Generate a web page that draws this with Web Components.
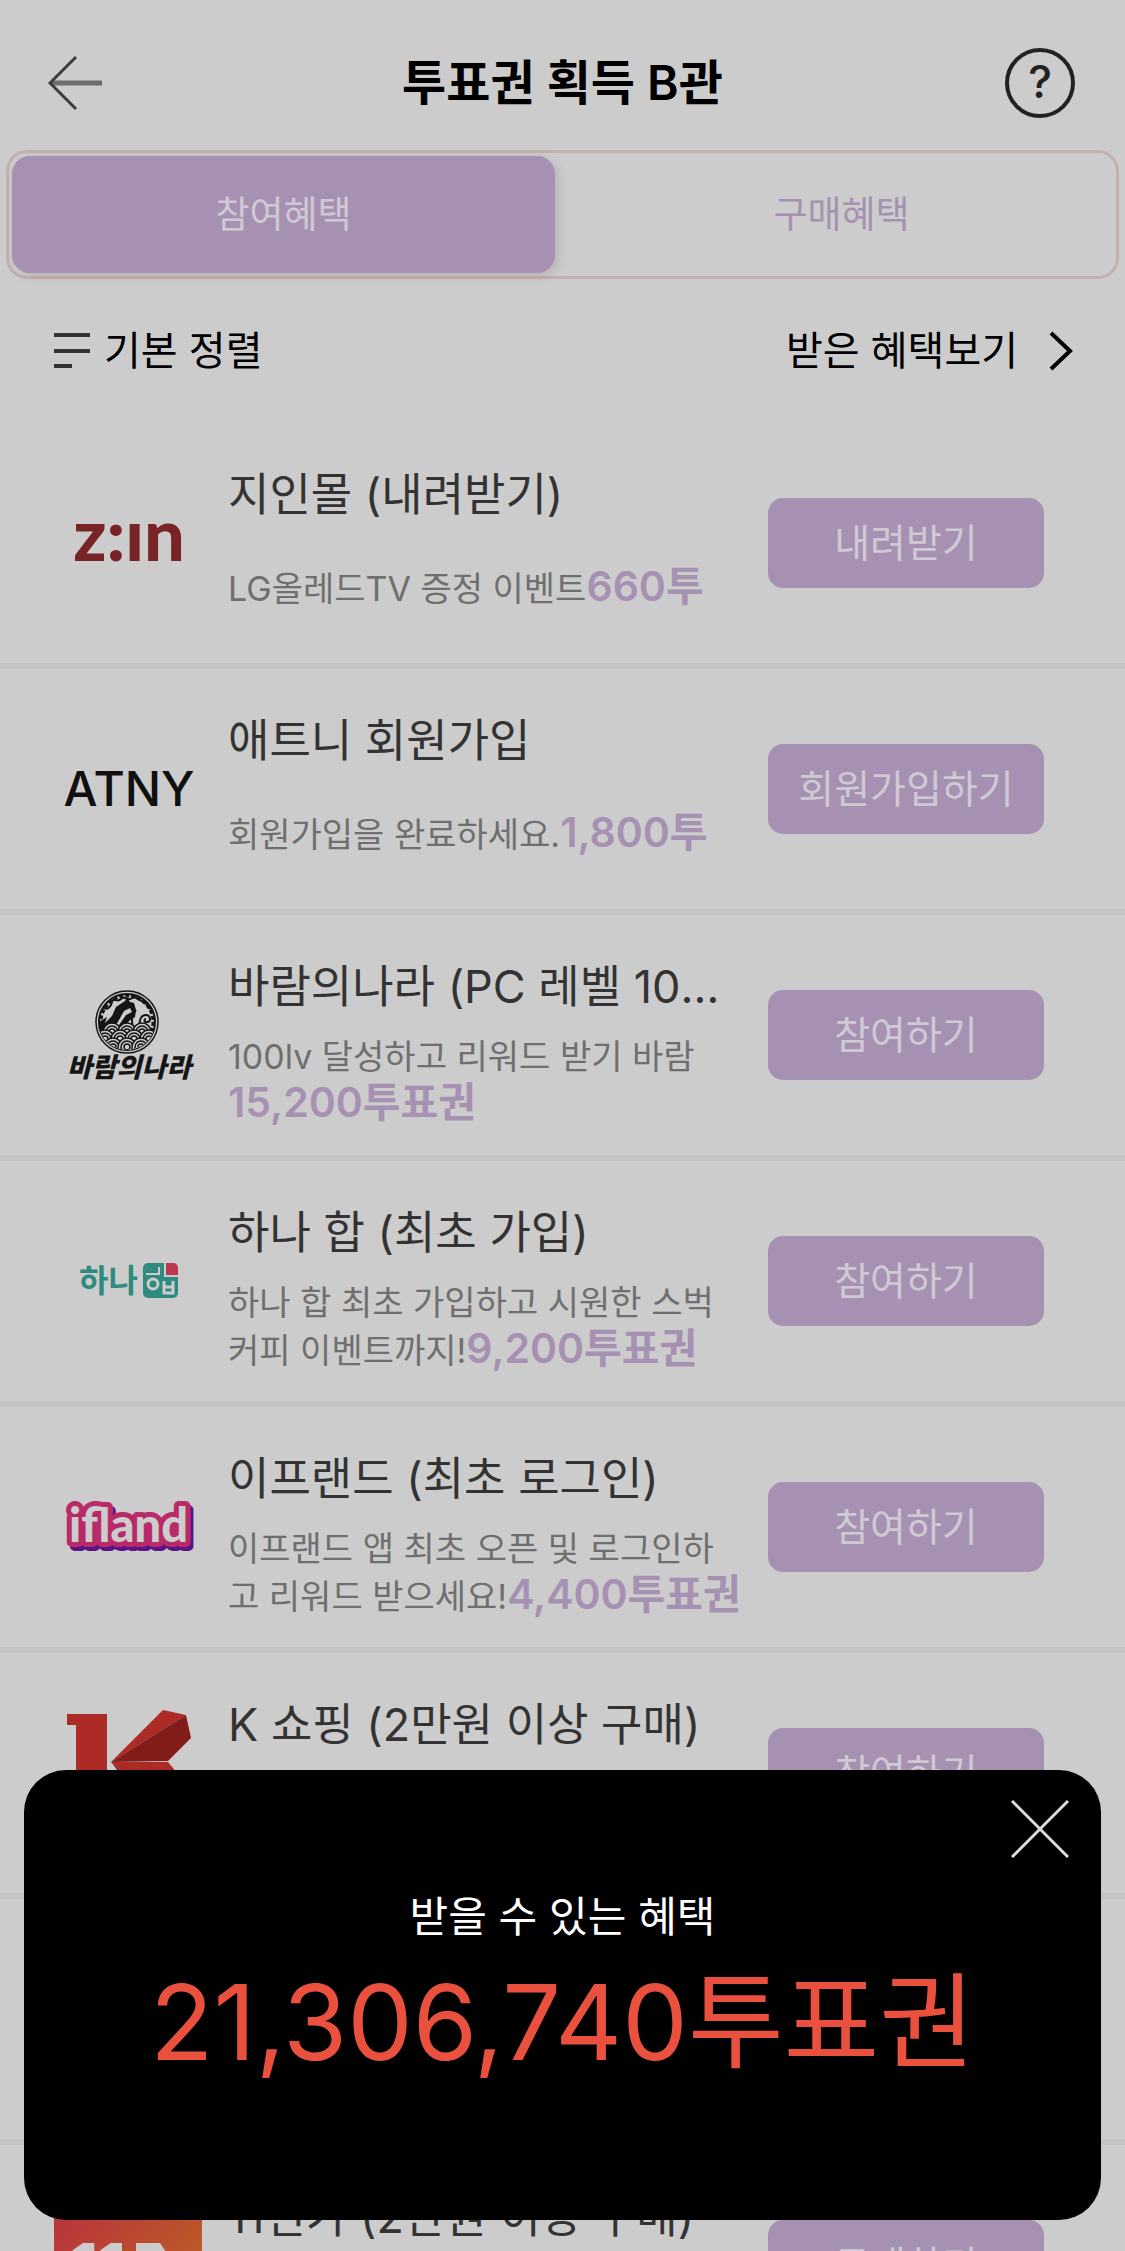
<!DOCTYPE html>
<html lang="ko">
<head>
<meta charset="utf-8">
<meta name="viewport" content="width=device-width, initial-scale=1">
<title>투표권 획득 B관</title>
<style>
  :root {
    --page: #ccc;
    --accent: #a791b3;
    --on-accent: #cfc9d3;
    --line: #c4c4c4;
  }
  body {
    margin: 0;
    background: var(--page);
    color: #000;
    font-family: Inter, "Noto Sans CJK KR", sans-serif;
  }
</style>
</head>
<body>
<vote-app>
  <app-header slot="header">투표권 획득 B관</app-header>
  <benefit-tabs slot="header" first="참여혜택" second="구매혜택"></benefit-tabs>
  <list-toolbar slot="header" sort="기본 정렬" history="받은 혜택보기"></list-toolbar>

  <offer-row name="지인몰 (내려받기)" points="660투" action="내려받기">
    <svg slot="logo" viewBox="0 0 148 150" role="img" aria-label="Z:IN">
      <text x="75" y="93" font-family="Lato" font-weight="900" font-size="72" text-anchor="middle" fill="#782427">z:ın</text>
    </svg>
    LG올레드TV 증정 이벤트
  </offer-row>

  <offer-row name="애트니 회원가입" points="1,800투" action="회원가입하기">
    <svg slot="logo" viewBox="0 0 148 150" role="img" aria-label="ATNY">
      <text x="75" y="92" font-family="Inter" font-weight="500" font-size="48" text-anchor="middle" fill="#101010">ATNY</text>
    </svg>
    회원가입을 완료하세요.
  </offer-row>

  <offer-row name="바람의나라 (PC 레벨 100 달성)" points="15,200투표권" action="참여하기">
    <svg slot="logo" viewBox="0 0 148 150" role="img" aria-label="바람의나라">
      <defs>
        <clipPath id="seal"><circle cx="73" cy="62" r="28"/></clipPath>
        <g id="wave" fill="#ccc" stroke="#151515" stroke-width="1.5">
          <circle r="9"/><circle r="6"/><circle r="3"/>
        </g>
      </defs>
      <circle cx="73" cy="62" r="31" fill="none" stroke="#151515" stroke-width="1.5"/>
      <circle cx="73" cy="62" r="28" fill="none" stroke="#151515" stroke-width="2"/>
      <g clip-path="url(#seal)">
        <circle cx="73" cy="62" r="26" fill="none" stroke="#151515" stroke-width="3" stroke-dasharray="4 2"/>
        <path d="M49 47c4 4 8 0 9-5s5 1 9-3 7 3 11-1 8 5 11 3 3 7 8 8" fill="none" stroke="#151515" stroke-width="2"/>
        <path d="M45 62l8-5-2 6 7-7 4-9 9-6 2-3 3 4 4 1 2 7-1 7-6 4-5 8-2 8H48z" fill="#151515"/>
        <path d="M70 51l6-3 2 4-6 3-9 13-2-1z" fill="#ccc"/>
        <path d="M79 68c-2-10-1-13 3-18M88 72c-4-6-3-16 3-17 6-1 7 8 1 7-2 0-2-3 0-3" fill="none" stroke="#151515" stroke-width="2"/>
        <use href="#wave" x="58" y="72"/><use href="#wave" x="73" y="72"/><use href="#wave" x="88" y="72"/>
        <use href="#wave" x="51" y="79"/><use href="#wave" x="66" y="79"/><use href="#wave" x="80" y="79"/><use href="#wave" x="95" y="79"/>
        <use href="#wave" x="59" y="87"/><use href="#wave" x="73" y="87"/><use href="#wave" x="87" y="87"/>
      </g>
      <text x="75" y="117" font-family="Noto Sans CJK KR" font-weight="900" font-style="italic" font-size="27" text-anchor="middle" fill="#151515">바람의나라</text>
    </svg>
    100lv 달성하고 리워드 받기 바람<br>
  </offer-row>

  <offer-row name="하나 합 (최초 가입)" points="9,200투표권" action="참여하기">
    <svg slot="logo" viewBox="0 0 148 150" role="img" aria-label="하나 합">
      <text x="25" y="86" font-family="Noto Sans CJK KR" font-weight="700" font-size="32" fill="#2f8a80">하나</text>
      <rect x="89" y="57" width="35" height="35" rx="5" fill="#2f8a80"/>
      <path d="M110 57h9a5 5 0 0 1 5 5v9h-14z" fill="#ccc"/>
      <path d="M112 57h7a5 5 0 0 1 5 5v7h-12z" fill="#bd3850"/>
      <path d="M92 68h13M105 61v8" stroke="#ccc" stroke-width="2" fill="none"/>
      <circle cx="99" cy="78" r="5" fill="none" stroke="#ccc" stroke-width="3"/>
      <path d="M110 75v12h9V75M110 81h9" fill="none" stroke="#ccc" stroke-width="3"/>
    </svg>
    하나 합 최초 가입하고 시원한 스벅<br>커피 이벤트까지!
  </offer-row>

  <offer-row name="이프랜드 (최초 로그인)" points="4,400투표권" action="참여하기">
    <svg slot="logo" viewBox="0 0 148 150" role="img" aria-label="ifland">
      <g font-family="Lato" font-weight="900" font-size="47" stroke-linejoin="round">
        <text x="18" y="94" fill="#5a1485" stroke="#5a1485" stroke-width="10" aria-hidden="true">ifland</text>
        <text x="15" y="90" fill="#ccc" stroke="#b92a68" stroke-width="10" paint-order="stroke">ifland</text>
      </g>
    </svg>
    이프랜드 앱 최초 오픈 및 로그인하<br>고 리워드 받으세요!
  </offer-row>

  <offer-row name="K 쇼핑 (2만원 이상 구매)" action="참여하기">
    <svg slot="logo" viewBox="0 0 148 150" role="img" aria-label="K 쇼핑">
      <path d="M13 16h40v118H22V27h-9z" fill="#ad2b27"/>
      <path d="M57 64l52-52 23 5z" fill="#ad2b27"/>
      <path d="M57 64l75-47 5 23-23 23z" fill="#811c18"/>
      <path d="M57 64h57l28 34-10 32z" fill="#ad2b27"/>
      <path d="M57 64l75 66-20 4z" fill="#811c18"/>
    </svg>
  </offer-row>

  <offer-row></offer-row>

  <offer-row name="11번가 (2만원 이상 구매)" action="구매하기">
    <svg slot="logo" viewBox="0 0 148 150" role="img" aria-label="11번가">
      <defs>
        <linearGradient id="eleven" x1="0" y1="0" x2="1" y2="1">
          <stop offset="0" stop-color="#b82d40"/><stop offset=".7" stop-color="#bd5a28"/>
        </linearGradient>
      </defs>
      <rect width="148" height="150" fill="url(#eleven)"/>
      <text x="16" y="99" font-family="Inter" font-weight="800" font-size="63" fill="#ccc">11</text>
      <path d="M82 53h24l8 12v34h-12V64H82z" fill="#ccc"/>
    </svg>
  </offer-row>

  <reward-popup slot="popup" label="받을 수 있는 혜택">21,306,740투표권</reward-popup>
</vote-app>

<script>
// small helper: open shadow root filled with markup
function render(el, html) {
  el.attachShadow({mode: 'open'}).innerHTML = html;
}

class VoteApp extends HTMLElement {
  connectedCallback() {
    render(this, `
      <style>
        :host { display: flex; flex-direction: column; height: 100vh; overflow: hidden; }
        header, main { flex: none; }
      </style>
      <header><slot name="header"></slot></header>
      <main><slot></slot></main>
      <slot name="popup"></slot>`);
  }
}

class AppHeader extends HTMLElement {
  connectedCallback() {
    render(this, `
      <style>
        :host {
          display: flex; align-items: center; justify-content: space-between;
          box-sizing: border-box; height: 150px; padding: 16px 48px 0;
        }
        h1 { margin: 0; font-size: 48px; line-height: 60px; font-weight: 600; }
        button { display: flex; padding: 0; border: 0; background: none; color: inherit; }
        svg { width: 72px; height: 72px; }
      </style>
      <button type="button" aria-label="뒤로">
        <svg viewBox="0 0 72 72" fill="none">
          <path d="M3 36h51" stroke="#6d6d6d" stroke-width="5"/>
          <path d="M28 10L2 36l26 26" stroke="#3c3c3c" stroke-width="3"/>
        </svg>
      </button>
      <h1><slot></slot></h1>
      <button type="button" aria-label="도움말">
        <svg viewBox="0 0 72 72">
          <circle cx="35" cy="36" r="33" fill="none" stroke="#222" stroke-width="4"/>
          <text x="35" y="51" font-family="Inter" font-weight="500" font-size="45" text-anchor="middle" fill="#222">?</text>
        </svg>
      </button>`);
  }
}

class BenefitTabs extends HTMLElement {
  connectedCallback() {
    render(this, `
      <style>
        :host {
          display: flex; gap: 15px; box-sizing: border-box; height: 129px; margin: 0 6px; padding: 3px;
          border: 3px solid #c5b0b0; border-radius: 21px;
        }
        button {
          flex: 1; padding: 0; border: 0; border-radius: 18px; background: none;
          font: inherit; font-size: 37px; line-height: 48px; color: var(--accent);
        }
        button[aria-selected=true] {
          background: var(--accent); color: var(--on-accent);
          box-shadow: 3px 3px 12px rgba(0, 0, 0, .12);
        }
      </style>
      <button type="button" role="tab" aria-selected="true">${this.getAttribute('first')}</button>
      <button type="button" role="tab" aria-selected="false">${this.getAttribute('second')}</button>`);
    this.setAttribute('role', 'tablist');
  }
}

class ListToolbar extends HTMLElement {
  connectedCallback() {
    render(this, `
      <style>
        :host {
          display: flex; align-items: center; justify-content: space-between;
          box-sizing: border-box; height: 144px; padding: 0 50px 0 54px;
        }
        button, a {
          display: flex; align-items: center; padding: 0; border: 0; background: none;
          font: inherit; font-size: 40px; line-height: 54px; color: #000; text-decoration: none;
        }
        button { gap: 14px; }
        a { gap: 29px; }
      </style>
      <button type="button">
        <svg width="36" height="36" viewBox="0 0 36 36">
          <path d="M0 2h36M0 18h36M0 33h18" stroke="#333" stroke-width="4"/>
        </svg>
        ${this.getAttribute('sort')}
      </button>
      <a href="#history">
        ${this.getAttribute('history')}
        <svg width="28" height="42" viewBox="0 0 28 42">
          <path d="M4 3l19 18L4 39" fill="none" stroke="#000" stroke-width="4"/>
        </svg>
      </a>`);
  }
}

class OfferRow extends HTMLElement {
  connectedCallback() {
    const name = this.getAttribute('name') || '';
    const points = this.getAttribute('points') || '';
    const action = this.getAttribute('action');
    render(this, `
      <style>
        :host {
          display: grid; grid-template-columns: 148px minmax(0, 1fr) 276px;
          align-items: center; column-gap: 26px;
          box-sizing: border-box; height: 246px; padding: 0 81px 0 54px;
          border-bottom: 6px solid var(--line);
        }
        ::slotted(svg) { display: block; width: 148px; height: 150px; }
        .text { padding-top: 20px; }
        h2 {
          margin: 0 0 18px; font-size: 45px; line-height: 54px; font-weight: 400; color: #333;
          white-space: nowrap; overflow: hidden; text-overflow: ellipsis;
        }
        .desc {
          display: flex; align-items: center; height: 98px;
          font-size: 34px; line-height: 48px; color: #6f6f6f; white-space: nowrap;
        }
        p { margin: 0; }
        strong { font-size: 41px; line-height: 42px; font-weight: 600; color: var(--accent); }
        button {
          height: 90px; padding: 0; border: 0; border-radius: 15px;
          background: var(--accent); color: var(--on-accent);
          font: inherit; font-size: 39px; line-height: 54px;
        }
      </style>
      <div><slot name="logo"></slot></div>
      <div class="text">
        <h2>${name}</h2>
        <div class="desc"><p><slot></slot><strong>${points}</strong></p></div>
      </div>
      ${action ? `<button type="button">${action}</button>` : ''}`);
    // drop the indentation round the description so the points follow it directly
    this.childNodes.forEach(node => {
      if (node.nodeType === Node.TEXT_NODE) node.data = node.data.trim();
    });
  }
}

class RewardPopup extends HTMLElement {
  connectedCallback() {
    render(this, `
      <style>
        :host {
          position: fixed; left: 24px; right: 24px; bottom: 31px;
          display: flex; flex-direction: column; align-items: center;
          box-sizing: border-box; height: 450px; padding: 30px 32px;
          border-radius: 42px; background: #000; color: #fff;
        }
        button { align-self: flex-end; display: flex; padding: 0; border: 0; background: none; }
        p { margin: 32px 0 0; font-size: 42px; line-height: 54px; }
        output { display: block; margin-top: 18px; font-size: 104px; line-height: 120px; color: #e9503e; }
      </style>
      <button type="button" aria-label="닫기">
        <svg width="58" height="58" viewBox="0 0 58 58">
          <path d="M1 1l56 56M57 1L1 57" stroke="#ddd" stroke-width="3"/>
        </svg>
      </button>
      <p>${this.getAttribute('label')}</p>
      <output><slot></slot></output>`);
    this.shadowRoot.querySelector('button').addEventListener('click', () => this.remove());
  }
}

customElements.define('vote-app', VoteApp);
customElements.define('app-header', AppHeader);
customElements.define('benefit-tabs', BenefitTabs);
customElements.define('list-toolbar', ListToolbar);
customElements.define('offer-row', OfferRow);
customElements.define('reward-popup', RewardPopup);
</script>
</body>
</html>
